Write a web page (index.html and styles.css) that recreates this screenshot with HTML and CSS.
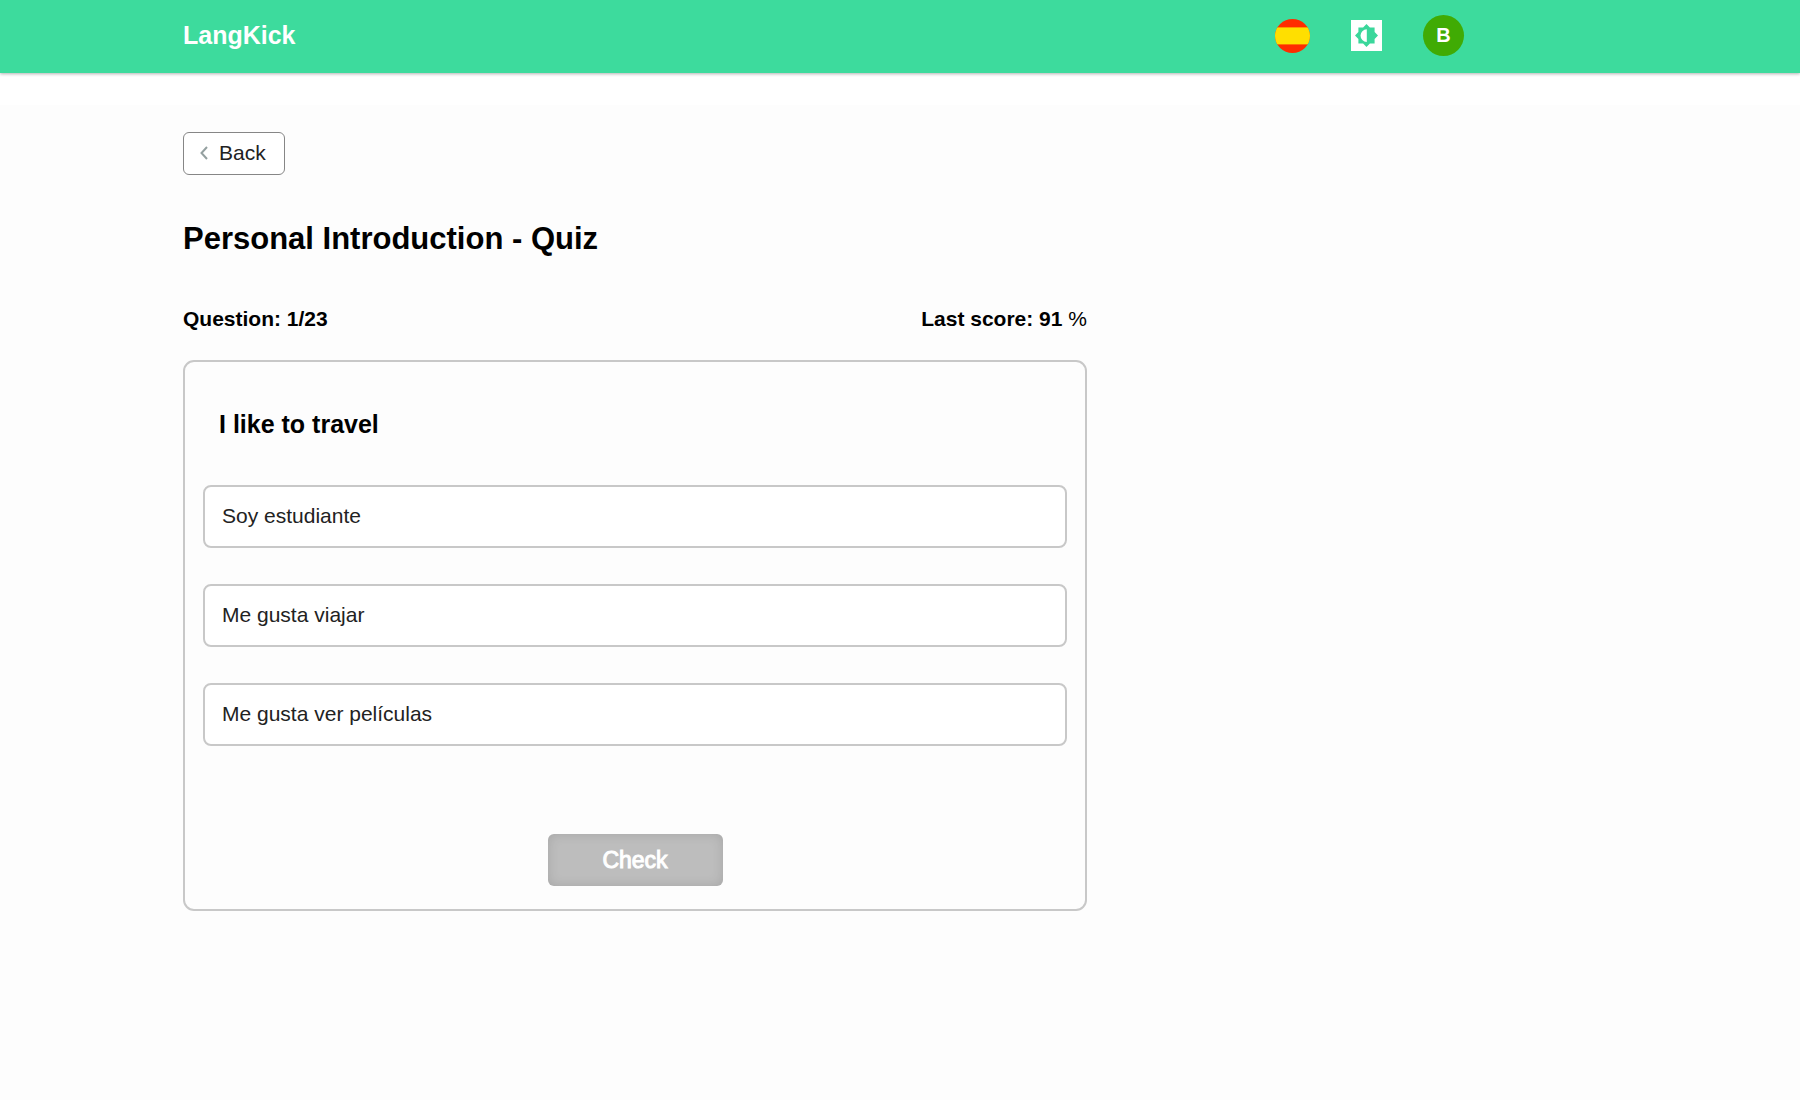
FILE: index.html
```html
<!DOCTYPE html>
<html lang="en">
<head>
  <meta charset="utf-8">
  <meta name="viewport" content="width=device-width, initial-scale=1">
  <title>LangKick - Quiz</title>
  <link rel="stylesheet" href="styles.css">
</head>
<body>
  <header class="topbar">
    <div class="topbar-inner">
      <a class="brand" href="#">LangKick</a>
      <nav class="actions" aria-label="Account">
        <button class="icon-button" type="button" aria-label="Spanish">
          <svg class="flag" viewBox="0 0 35 34" aria-hidden="true">
            <defs><clipPath id="round"><ellipse cx="17.5" cy="17" rx="17.5" ry="17"/></clipPath></defs>
            <g clip-path="url(#round)">
              <rect width="35" height="34" fill="#ff2c00"/>
              <rect y="8.4" width="35" height="17" fill="#ffdf00"/>
            </g>
          </svg>
        </button>
        <button class="icon-button" type="button" aria-label="Toggle theme">
          <svg class="theme" viewBox="0 0 31 31" aria-hidden="true">
            <rect width="31" height="31" fill="#fff"/>
            <path fill="#3ad79b" d="M15.5 4l3.4 3.4h4.7v4.7L27 15.500l-3.400 3.400v4.700h-4.700L15.500 27l-3.400-3.400H7.400v-4.700L4 15.500l3.400-3.400V7.400h4.700z"/>
            <path fill="#fff" d="M15.800 9.300v12.600a6.300 6.300 0 0 1 0-12.600z"/>
          </svg>
        </button>
        <button class="avatar" type="button">B</button>
      </nav>
    </div>
  </header>
  <main class="page">
    <button class="back" type="button">
      <svg class="chevron" viewBox="0 0 8 14" aria-hidden="true"><path d="M7 1L1.500 7L7 13" fill="none" stroke="#94a0a0" stroke-width="2"/></svg>
      Back
    </button>
    <h1 class="title">Personal Introduction - Quiz</h1>
    <div class="status">
      <span>Question: 1/23</span>
      <span>Last score: 91 <span class="percent">%</span></span>
    </div>
    <section class="card">
      <h2 class="question">I like to travel</h2>
      <div class="answers">
        <button class="answer" type="button">Soy estudiante</button>
        <button class="answer" type="button">Me gusta viajar</button>
        <button class="answer" type="button">Me gusta ver películas</button>
      </div>
      <button class="check" type="button">Check</button>
    </section>
  </main>
</body>
</html>
```
FILE: styles.css
```css
* {
  box-sizing: border-box;
}

body {
  margin: 0;
  background: #fdfdfd;
  color: #000;
  font: 21px/24px "Liberation Sans", Arial, sans-serif;
}

button {
  margin: 0;
  padding: 0;
  border: 0;
  background: none;
  color: inherit;
  font: inherit;
  cursor: pointer;
}

.topbar {
  padding: 15px 24px 17px 183px;
  background: #3ddb9d;
  box-shadow: 0 1px 3px rgba(0, 0, 0, 0.3), 0 32px 0 #fff;
}

.topbar-inner {
  display: flex;
  align-items: center;
  justify-content: space-between;
  max-width: 1281px;
}

.brand {
  padding-bottom: 2px;
  color: #fff;
  font-size: 25px;
  font-weight: bold;
  line-height: 28px;
  text-decoration: none;
}

.actions {
  display: flex;
  align-items: center;
  gap: 41px;
}

.icon-button svg {
  display: block;
}

.flag {
  width: 35px;
  height: 34px;
}

.theme {
  width: 31px;
  height: 31px;
}

.avatar {
  width: 41px;
  height: 41px;
  padding-bottom: 2px;
  border-radius: 50%;
  background: #40ab04;
  color: #fff;
  font-size: 20px;
  font-weight: bold;
}

.page {
  max-width: 1111px;
  padding: 59px 24px 48px 183px;
}

.back {
  display: flex;
  align-items: center;
  gap: 11px;
  padding: 8px 18px 10px 16px;
  border: 1px solid #868686;
  border-radius: 6px;
  background: #fff;
  color: #222;
  line-height: 23px;
}

.chevron {
  width: 8px;
  height: 14px;
}

.title {
  margin: 46px 0 50px;
  font-size: 31px;
  line-height: 36px;
}

.status {
  display: flex;
  justify-content: space-between;
  margin-bottom: 29px;
  font-weight: bold;
}

.percent {
  font-weight: normal;
}

.card {
  padding: 0 18px 23px;
  border: 2px solid #c8c8c8;
  border-radius: 11px;
}

.question {
  margin: 0;
  padding: 48px 16px 47px;
  font-size: 25px;
  line-height: 28px;
}

.answers {
  display: grid;
  gap: 36px;
}

.answer {
  padding: 17px 17px 18px;
  border: 2px solid #c8c8c8;
  border-radius: 8px;
  background: #fff;
  color: #222;
  text-align: left;
}

.check {
  display: block;
  width: 175px;
  margin: 88px auto 0;
  padding: 12px 16px;
  border-radius: 6px;
  background: #bdbdbd;
  box-shadow: inset 0 0 12px rgba(0, 0, 0, 0.12);
  color: #fff;
  font-size: 23px;
  line-height: 28px;
  -webkit-text-stroke: 1px #fff;
}
```
